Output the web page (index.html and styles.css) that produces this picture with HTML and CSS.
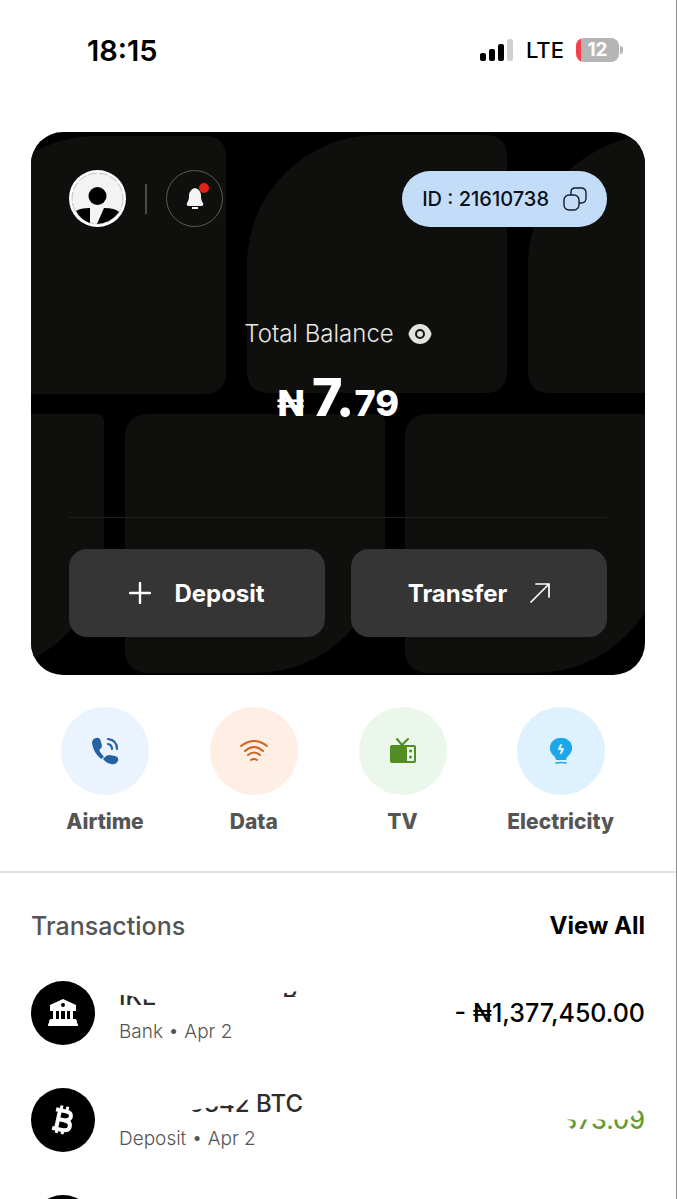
FILE: index.html
```html
<!DOCTYPE html>
<html lang="en">
<head>
    <meta charset="utf-8">
    <meta name="viewport" content="width=device-width, initial-scale=1">
    <title>Wallet</title>
    <link rel="stylesheet" href="styles.css">
</head>
<body>
    <div class="screen">
        <div class="statusbar">
            <span class="clock">18:15</span>
            <div class="status-right">
                <svg class="signal" width="34" height="22" viewBox="0 0 34 22">
                    <rect x="0" y="14" width="6" height="8" rx="2"/>
                    <rect x="9" y="10" width="6" height="12" rx="2"/>
                    <rect x="18" y="5" width="6" height="17" rx="2"/>
                    <rect x="27" y="0" width="6" height="22" rx="2" fill="#d0d0d0"/>
                </svg>
                <span class="network">LTE</span>
                <span class="battery">12</span>
            </div>
        </div>

        <section class="card">
            <svg class="card-bg" viewBox="0 0 614 543" preserveAspectRatio="xMidYMid slice">
                <defs>
                    <path id="leaf" d="M130 0H238Q260 0 260 22V236Q260 258 238 258H22Q0 258 0 236V130A130 130 0 0 1 130 0Z"/>
                    <path id="leaf2" d="M24 0H252Q260 0 260 8V130A130 130 0 0 1 130 259H24Q0 259 0 235V24Q0 0 24 0Z"/>
                </defs>
                <use href="#leaf" x="-65" y="4"/>
                <use href="#leaf" x="216" y="3"/>
                <use href="#leaf" x="497" y="3"/>
                <use href="#leaf2" x="-187" y="282"/>
                <use href="#leaf2" x="94" y="282"/>
                <use href="#leaf2" x="374" y="282"/>
            </svg>
            <div class="card-top">
                <div class="card-user">
                    <svg class="avatar" width="57" height="57" viewBox="0 0 57 57">
                        <circle cx="28.5" cy="28.5" r="28.5" fill="#fff"/>
                        <circle cx="28.5" cy="28.5" r="25.5" fill="#f3f3f3" stroke="#999" stroke-width="0.6" stroke-dasharray="9 2"/>
                        <circle cx="28.5" cy="26" r="9"/>
                        <path d="M7 41Q11 38 21 38V53Q12 50 7 41ZM35 38Q46 38 50 42Q42 53 28 54Z"/>
                    </svg>
                    <span class="vline"></span>
                    <button class="bell" aria-label="Notifications">
                        <svg width="18" height="22" viewBox="0 0 18 22" fill="#f4f4f4">
                            <path d="M9 0C5 1 3 4 3 8C3 12 2 13 1 15Q0 18 3 18H15Q18 18 17 15C16 13 15 12 15 8C15 4 13 1 9 0ZM6 19H12V21H6Z"/>
                        </svg>
                        <span class="dot"></span>
                    </button>
                </div>
                <button class="pill">
                    <span>ID : 21610738</span>
                    <svg width="24" height="24" viewBox="0 0 24 24" fill="none" stroke="#161d29" stroke-width="1.4">
                        <rect x="1" y="8" width="15" height="15" rx="5"/>
                        <path d="M8 8V5Q8 1 12 1H18Q23 1 23 6V11Q23 16 18 16H16"/>
                    </svg>
                </button>
            </div>
            <div class="balance">
                <div class="balance-label">
                    <span>Total Balance</span>
                    <svg width="24" height="20" viewBox="0 0 24 20">
                        <path d="M12 0C18 0 21 4 23 8Q24 10 23 12C21 16 18 20 12 20S3 16 1 12Q0 10 1 8C3 4 6 0 12 0Z" fill="#e2e2de"/>
                        <circle cx="12" cy="10" r="4" fill="none" stroke="#141412" stroke-width="2"/>
                    </svg>
                </div>
                <div class="balance-value"><span class="naira">₦</span><span class="whole">7.</span><span class="cents">79</span></div>
            </div>
            <div class="card-actions">
                <button class="action">
                    <svg width="22" height="22" viewBox="0 0 22 22" stroke="#fff" stroke-width="2.4" stroke-linecap="round"><path d="M11 1V21M1 11H21"/></svg>
                    <span>Deposit</span>
                </button>
                <button class="action">
                    <span>Transfer</span>
                    <svg width="20" height="20" viewBox="0 0 20 20" fill="none" stroke="#fff" stroke-width="1.7" stroke-linecap="round" stroke-linejoin="round"><path d="M1 19L19 1M6 1H19V14"/></svg>
                </button>
            </div>
        </section>

        <nav class="services">
            <a class="service" href="#">
                <span class="circle blue">
                    <svg width="28" height="28" viewBox="0 0 28 28">
                        <path d="M5 1Q9 0 10 5L11 9Q11 11 9 12Q8 13 9 15L13 20L10 22Q2 15 1 6Q1 2 5 1Z" fill="#24639f"/>
                        <path d="M12 22L14 20Q16 18 18 18L24 19Q28 20 27 24Q25 28 20 27Q15 26 12 22Z" fill="#24639f"/>
                        <path d="M17 7Q21 8 21 12M17 2Q26 3 26 12" fill="none" stroke="#24639f" stroke-width="2.2" stroke-linecap="round"/>
                    </svg>
                </span>
                <span class="service-name">Airtime</span>
            </a>
            <a class="service" href="#">
                <span class="circle orange">
                    <svg width="28" height="22" viewBox="0 0 28 22" fill="none" stroke="#d2631c" stroke-width="2" stroke-linecap="round">
                        <path d="M1 6Q14 -4 27 6M5 11Q14 3 23 11M8 15Q14 10 20 15M11 20Q14 18 17 20"/>
                    </svg>
                </span>
                <span class="service-name">Data</span>
            </a>
            <a class="service" href="#">
                <span class="circle green">
                    <svg width="26" height="26" viewBox="0 0 26 26">
                        <path d="M7 1L12 7L18 1" fill="none" stroke="#518d22" stroke-width="2" stroke-linecap="round"/>
                        <path fill-rule="evenodd" d="M2 7H24Q26 7 26 9V23Q26 25 24 25H2Q0 25 0 23V9Q0 7 2 7ZM17 9V23H24V9Z" fill="#518d22"/>
                        <circle cx="20.5" cy="13" r="1.5" fill="#518d22"/>
                        <circle cx="20.5" cy="19" r="1.5" fill="#518d22"/>
                    </svg>
                </span>
                <span class="service-name">TV</span>
            </a>
            <a class="service" href="#">
                <span class="circle sky">
                    <svg width="22" height="28" viewBox="0 0 22 28">
                        <path d="M11 1A10 10 0 0 1 18 19Q16 21 16 23H6Q6 21 4 19A10 10 0 0 1 11 1Z" fill="#1ba7e8"/>
                        <path d="M11 8L9 12H13L11 16" fill="none" stroke="#e6f6ff" stroke-width="2" stroke-linecap="round" stroke-linejoin="round"/>
                        <path d="M6 26Q11 25 16 26" fill="none" stroke="#1ba7e8" stroke-width="1.6" stroke-linecap="round"/>
                    </svg>
                </span>
                <span class="service-name">Electricity</span>
            </a>
        </nav>

        <section class="transactions">
            <div class="section-head">
                <h2>Transactions</h2>
                <a class="viewall" href="#">View All</a>
            </div>
            <div class="row">
                <span class="row-icon">
                    <svg width="30" height="28" viewBox="0 0 30 28" fill="#fff">
                        <path fill-rule="evenodd" d="M2 6L15 0L28 6V12H2ZM15 4A2 2 0 0 0 15 8A2 2 0 0 0 15 4Z"/>
                        <path d="M5 12H8V20H5ZM11 12H13V20H11ZM17 12H19V20H17ZM22 12H25V20H22ZM3 20H27Q29 20 29 24Q30 24 30 27H0Q0 24 1 24Q1 20 3 20Z"/>
                    </svg>
                </span>
                <div class="row-text">
                    <div class="row-title"><span class="hide-name">IKE</span><span class="hide-tail">B</span></div>
                    <div class="row-sub">Bank • Apr 2</div>
                </div>
                <div class="amount">- ₦1,377,450.00</div>
            </div>
            <div class="row">
                <span class="row-icon">
                    <svg width="24" height="30" viewBox="0 0 24 30" fill="none" stroke="#fff">
                        <g transform="rotate(12 12 15)">
                            <path d="M3 6H13Q19 6 19 10T13 15H7M13 15Q20 15 20 20T13 25H3M7 6V25" stroke-width="4"/>
                            <path d="M8 1V6M14 1V6M8 25V29M14 25V29" stroke-width="3"/>
                        </g>
                    </svg>
                </span>
                <div class="row-text">
                    <div class="row-title right"><span class="hide-digits">0342</span> BTC</div>
                    <div class="row-sub">Deposit • Apr 2</div>
                </div>
                <div class="amount plus"><span class="hide-amount">373.09</span></div>
            </div>
            <div class="row">
                <span class="row-icon"></span>
            </div>
        </section>
    </div>
</body>
</html>
```
FILE: styles.css
```css
* {
    box-sizing: border-box;
    margin: 0;
}

body {
    background: #fff;
    color: #000;
    font-family: Inter, "Liberation Sans", sans-serif;
}

button {
    border: 0;
    padding: 0;
    font-family: inherit;
    cursor: pointer;
}

a {
    color: inherit;
    text-decoration: none;
}

svg {
    display: block;
    flex: none;
}

.screen {
    height: 100vh;
    overflow: hidden;
    border-right: 1px solid #8c8c8c;
}

/* status bar */
.statusbar {
    display: flex;
    justify-content: space-between;
    align-items: center;
    height: 132px;
    padding: 0 53px 32px 87px;
}

.clock {
    font-size: 29px;
    font-weight: 600;
}

.status-right {
    display: flex;
    align-items: center;
    gap: 12px;
}

.network {
    font-size: 22px;
    font-weight: 500;
}

.battery {
    position: relative;
    width: 43px;
    height: 24px;
    margin-right: 4px;
    border-radius: 8px;
    background: linear-gradient(to right, #f8404a 5px, #b5b5b5 5px);
    color: #fff;
    font-size: 19px;
    font-weight: 700;
    line-height: 24px;
    text-align: center;
}

.battery::after {
    content: "";
    position: absolute;
    right: -4px;
    top: 8px;
    width: 3px;
    height: 8px;
    border-radius: 0 3px 3px 0;
    background: #b5b5b5;
}

/* balance card */
.card {
    position: relative;
    margin: 0 31px;
    padding: 38px;
    border-radius: 32px;
    background: #000;
    color: #fff;
    overflow: hidden;
}

.card-bg {
    position: absolute;
    top: 0;
    left: 0;
    width: 100%;
    height: 100%;
    fill: #0f0f0d;
}

.card-top,
.balance,
.card-actions {
    position: relative;
}

.card-top {
    display: flex;
    justify-content: space-between;
    align-items: center;
}

.card-user {
    display: flex;
    align-items: center;
    gap: 19px;
}

.vline {
    width: 2px;
    height: 30px;
    background: #4a4a48;
}

.bell {
    position: relative;
    display: flex;
    justify-content: center;
    align-items: center;
    width: 57px;
    height: 57px;
    border: 1px solid #5a5a58;
    border-radius: 50%;
    background: none;
}

.dot {
    position: absolute;
    top: 12px;
    right: 13px;
    width: 10px;
    height: 10px;
    border-radius: 50%;
    background: #e2231a;
}

.pill {
    display: flex;
    align-items: center;
    gap: 14px;
    height: 56px;
    padding: 0 20px;
    border-radius: 28px;
    background: #c3dcf7;
    color: #0c111b;
    font-size: 20px;
    font-weight: 500;
}

.balance {
    padding: 90px 0 84px;
}

.balance-label {
    display: flex;
    justify-content: center;
    align-items: center;
    gap: 14px;
    color: #e6e6e3;
    font-size: 24px;
    font-weight: 300;
    line-height: 34px;
}

.balance-value {
    display: flex;
    justify-content: center;
    align-items: baseline;
    margin-top: 17px;
    font-weight: 800;
    line-height: 60px;
}

.naira {
    margin-right: 8px;
    font-size: 36px;
}

.whole {
    font-size: 52px;
}

.cents {
    font-size: 36px;
}

.card-actions {
    display: flex;
    gap: 26px;
    padding-top: 31px;
    border-top: 1px solid #221d1d;
}

.action {
    display: flex;
    flex: 1;
    justify-content: center;
    align-items: center;
    gap: 23px;
    height: 88px;
    border-radius: 18px;
    background: #353535;
    color: #fff;
    font-size: 24px;
    font-weight: 700;
}

/* services */
.services {
    display: flex;
    justify-content: space-between;
    padding: 32px 62px 34px 61px;
    border-bottom: 2px solid #e2e2e2;
}

.service {
    display: flex;
    flex-direction: column;
    align-items: center;
    min-width: 88px;
    gap: 12px;
}

.circle {
    display: flex;
    justify-content: center;
    align-items: center;
    width: 88px;
    height: 88px;
    border-radius: 50%;
}

.blue {
    background: #eaf3fe;
}

.orange {
    background: #feeee4;
}

.green {
    background: #ebf7eb;
}

.sky {
    background: #ddf2fe;
}

.service-name {
    color: #555;
    font-size: 21px;
    font-weight: 800;
    line-height: 30px;
}

/* transactions */
.transactions {
    padding: 36px 31px 0;
}

.section-head {
    display: flex;
    justify-content: space-between;
    align-items: center;
    margin-bottom: 38px;
    line-height: 34px;
}

h2 {
    color: #555;
    font-size: 25px;
    font-weight: 500;
}

.viewall {
    font-size: 24px;
    font-weight: 700;
}

.row {
    display: flex;
    align-items: center;
    gap: 24px;
    margin-bottom: 43px;
}

.row-icon {
    display: flex;
    flex: none;
    justify-content: center;
    align-items: center;
    width: 64px;
    height: 64px;
    border-radius: 50%;
    background: #000;
}

.row-text {
    width: 184px;
}

.row-title {
    display: flex;
    justify-content: space-between;
    margin-bottom: 7px;
    color: #2d2d2d;
    font-size: 24px;
    font-weight: 500;
    line-height: 30px;
    white-space: pre;
}

.row-title.right {
    justify-content: flex-end;
}

.row-sub {
    color: #555;
    font-size: 19px;
    font-weight: 300;
    line-height: 26px;
}

.amount {
    margin-left: auto;
    font-size: 25px;
    font-weight: 500;
    white-space: nowrap;
}

.plus {
    color: #659d32;
}

/* redacted parts of a line, only slivers of the letters stay */
.hide-name {
    clip-path: polygon(0 45%, 20% 45%, 100% 68%, 100% 100%, 0 100%);
}

.hide-tail {
    margin-right: 5px;
    clip-path: polygon(0 40%, 100% 32%, 100% 52%, 0 52%);
}

.hide-digits {
    clip-path: polygon(0 74%, 50% 58%, 75% 54%, 100% 34%, 100% 100%, 0 100%);
}

.hide-amount {
    clip-path: polygon(0 48%, 80% 48%, 100% 0, 100% 100%, 20% 100%);
}
```
